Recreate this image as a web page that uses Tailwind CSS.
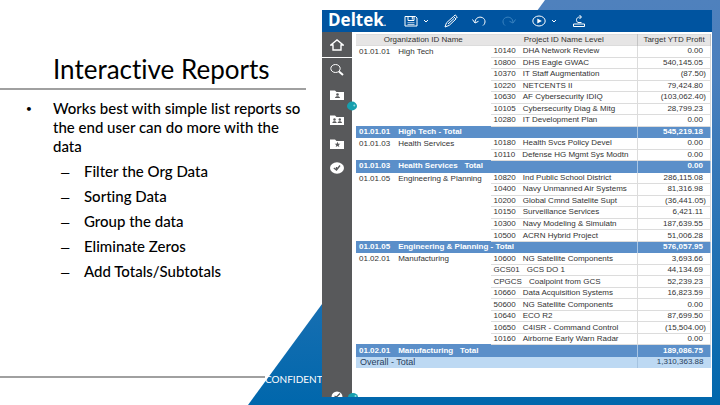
<!DOCTYPE html>
<html lang="en">
  <head>
    <meta charset="UTF-8" />
    <meta name="viewport" content="width=device-width, initial-scale=1.0" />
    <title>Interactive Reports</title>
    <script src="https://cdn.jsdelivr.net/npm/@tailwindcss/browser@4"></script>
  </head>
  <body class="bg-white text-black">
    <div class="relative isolate flex min-h-screen overflow-hidden">
      <!-- slide background -->
      <svg class="absolute inset-0 -z-10 h-full w-full" viewBox="0 0 720 405" preserveAspectRatio="none" aria-hidden="true">
        <defs>
          <linearGradient id="slope" x1="0" y1="0" x2="0" y2="1">
            <stop offset="0" stop-color="#4f81bd" />
            <stop offset="0.2" stop-color="#4a7fbd" />
            <stop offset="1" stop-color="#0067ac" />
          </linearGradient>
        </defs>
        <path d="M545 0H720V405H248Z" fill="url(#slope)" />
      </svg>

      <section class="flex w-[322px] shrink-0 flex-col font-[Lato,'Liberation_Sans',sans-serif] [font-variant-ligatures:none]">
        <h1 class="mr-4 border-b-2 border-[#a0a0a0] pt-[53px] pb-[3px] pl-[53px] text-[26px] leading-8">Interactive Reports</h1>
        <ul class="pt-[9px] text-[15px] leading-[19px] font-medium">
          <li class="flex">
            <span class="w-[53px] shrink-0 pl-[26px] text-[10px]">•</span>
            <span class="pr-4">Works best with simple list reports so the end user can do more with the data</span>
          </li>
          <li class="pt-1.5 pl-[61px]">
            <ul class="space-y-1.5">
              <li class="flex"><span class="w-[23px] font-['Liberation_Sans',sans-serif]">–</span>Filter the Org Data</li>
              <li class="flex"><span class="w-[23px] font-['Liberation_Sans',sans-serif]">–</span>Sorting Data</li>
              <li class="flex"><span class="w-[23px] font-['Liberation_Sans',sans-serif]">–</span>Group the data</li>
              <li class="flex"><span class="w-[23px] font-['Liberation_Sans',sans-serif]">–</span>Eliminate Zeros</li>
              <li class="flex"><span class="w-[23px] font-['Liberation_Sans',sans-serif]">–</span>Add Totals/Subtotals</li>
            </ul>
          </li>
        </ul>
        <footer class="mt-auto flex pb-[18px] text-[10px] leading-4 text-white">
          <span class="mt-[5px] h-0.5 w-[265px] shrink-0 bg-[#a0a0a0]"></span>CONFIDENT
        </footer>
      </section>

      <section class="mt-2.5 mr-2 mb-2 flex flex-1 flex-col bg-white font-['Liberation_Sans',Arial,sans-serif]">
        <header class="flex h-[22px] shrink-0 items-center bg-[#0054a0] pl-1.5 text-white">
          <span class="w-[76px] font-['Open_Sans',sans-serif] text-[17px] leading-5 font-bold">Deltek<span class="text-[8px]">.</span></span>
          <button aria-label="Save" class="w-3.5">
            <svg class="h-3.5 w-3.5" viewBox="0 0 14 14" fill="none" stroke="currentColor"><path d="M1 2.5H11.5L13 4V12H1Z" /><path d="M4 2.5V6.5H10V2.5M8.3 3V5.5" /><path d="M3.5 8.7H10.5M3.5 10.5H10.5" stroke-width=".7" /></svg>
          </button>
          <button aria-label="Save options" class="ml-1 w-2">
            <svg class="h-2 w-2" viewBox="0 0 8 8" fill="none" stroke="currentColor"><path d="M2 3L4 5L6 3" /></svg>
          </button>
          <button aria-label="Edit" class="ml-3.5 w-3.5">
            <svg class="h-3.5 w-3.5" viewBox="0 0 14 14" fill="none" stroke="currentColor"><path d="M1 13L2.5 8.8L9.5 2.5L12 5L5.2 11.4Z" /><path d="M9.8 2.2L11.2 1L13.3 3L12 4.5M4 10L10 4.5" /></svg>
          </button>
          <button aria-label="Undo" class="ml-3.5 w-3.5">
            <svg class="h-3.5 w-3.5" viewBox="0 0 14 14" fill="none" stroke="currentColor"><path d="M.5 5.5L3 9L6.5 7.3M3 8.5C3.2 4.5 6 2.8 9 3.2C13.5 4 14.3 9 11 11.5" /></svg>
          </button>
          <button aria-label="Redo" class="ml-4 w-3.5 text-[#3a83c0]">
            <svg class="h-3.5 w-3.5" viewBox="0 0 14 14" fill="none" stroke="currentColor"><path d="M13.5 5.5L11 9L7.5 7.3M11 8.5C10.8 4.5 8 2.8 5 3.2C.5 4-.3 9 3 11.5" /></svg>
          </button>
          <button aria-label="Run" class="ml-4 w-3.5">
            <svg class="h-3.5 w-3.5" viewBox="0 0 14 14" fill="none" stroke="currentColor"><ellipse cx="7" cy="7" rx="6.2" ry="5" /><path d="M5.3 4.5L9.8 7L5.3 9.5Z" fill="currentColor" stroke="none" /></svg>
          </button>
          <button aria-label="Run options" class="ml-1 w-2">
            <svg class="h-2 w-2" viewBox="0 0 8 8" fill="none" stroke="currentColor"><path d="M2 3L4 5L6 3" /></svg>
          </button>
          <button aria-label="Share" class="ml-3.5 w-3.5">
            <svg class="h-3.5 w-3.5" viewBox="0 0 14 14" fill="none" stroke="currentColor"><path d="M1.5 10H12.5V12.5H1.5Z" /><path d="M9.5 8.5H6C3.5 7.5 4 3.2 7.5 3H9M7.5 1L9.5 3L7.5 5" /></svg>
          </button>
        </header>

        <div class="flex flex-1">
          <nav class="relative w-[30px] shrink-0 bg-[#58595b] text-white">
            <div class="flex flex-col items-center">
              <a href="#" aria-label="Home" class="flex h-[26px] w-full items-center justify-center border-b border-white">
                <svg class="h-3.5 w-3.5" viewBox="0 0 14 14" fill="none" stroke="currentColor" stroke-width="1.4"><path d="M.8 7L7 2L13.2 7H11V12H3V7Z" /></svg>
              </a>
              <a href="#" aria-label="Search" class="flex h-6 items-center">
                <svg class="h-3.5 w-3.5" viewBox="0 0 14 14" fill="none" stroke="currentColor"><ellipse cx="5.5" cy="5.5" rx="4.7" ry="4" /><path d="M9 8.5L13 12" stroke-width="2" /></svg>
              </a>
              <a href="#" aria-label="My content" class="flex h-[25px] items-center">
                <svg class="h-3.5 w-3.5" viewBox="0 0 14 14" fill="currentColor"><path d="M0 2.5H5L6.5 4H14V12H0Z" /><g fill="#58595b"><circle cx="7.5" cy="6.5" r="1.3" /><path d="M5 10C5 7.8 10 7.8 10 10Z" /></g></svg>
              </a>
              <a href="#" aria-label="Team content" class="flex h-[25px] items-center">
                <svg class="h-3.5 w-3.5" viewBox="0 0 14 14" fill="currentColor"><path d="M0 2.5H5L6.5 4H14V12H0Z" /><g fill="#58595b"><circle cx="4.5" cy="6.5" r="1.2" /><path d="M2.3 10C2.3 7.8 6.7 7.8 6.7 10Z" /><circle cx="9.8" cy="6.5" r="1.2" /><path d="M7.6 10C7.6 7.8 12 7.8 12 10Z" /></g></svg>
              </a>
              <a href="#" aria-label="Favorites" class="flex h-6 items-center">
                <svg class="h-3.5 w-3.5" viewBox="0 0 14 14" fill="currentColor"><path d="M0 2.5H5L6.5 4H14V12H0Z" /><path d="M7.5 4.8L8.3 6.7H10.4L8.7 8L9.3 10L7.5 8.9L5.7 10L6.3 8L4.6 6.7H6.7Z" fill="#58595b" /></svg>
              </a>
              <a href="#" aria-label="Recent" class="flex h-6 items-center">
                <svg class="h-3.5 w-3.5" viewBox="0 0 14 14"><ellipse cx="7" cy="7" rx="7" ry="5.8" fill="currentColor" /><path d="M3.8 7L6.5 9L10 4.5M6.5 9V6" fill="none" stroke="#58595b" stroke-width="1.3" /></svg>
              </a>
            </div>
            <svg class="absolute top-[69px] left-[25px] h-2.5 w-2.5" viewBox="0 0 10 10" aria-hidden="true"><ellipse cx="5" cy="5" rx="5" ry="4.4" fill="#169fae" /><circle cx="7.3" cy="4.5" r="1" fill="#8fd9df" /></svg>
            <!-- next entries, cut off by the panel edge -->
            <svg class="absolute bottom-0 left-2 h-1.5 w-7" viewBox="0 0 28 6" aria-hidden="true"><ellipse cx="7" cy="6" rx="5.5" ry="5.5" fill="#fff" /><path d="M4.5 5L6.5 6L10 2.5" fill="none" stroke="#58595b" stroke-width="1.3" /><ellipse cx="23" cy="6" rx="5" ry="4" fill="#169fae" /><circle cx="25.5" cy="5" r="1" fill="#8fd9df" /></svg>
          </nav>

          <div class="flex-1 pt-0.5 pr-px pl-1">
            <table class="h-[334px] w-full table-fixed text-[8px] leading-[10px] whitespace-nowrap text-[#333]">
              <colgroup>
                <col />
                <col class="w-[147px]" />
                <col class="w-[73px]" />
              </colgroup>
              <thead class="bg-[#e6e5e5]">
                <tr class="border-y border-[#dcdcdc]">
                  <th class="font-normal">Organization ID Name</th>
                  <th class="font-normal">Project ID Name Level</th>
                  <th class="border-x border-[#c4c4c4] font-normal">Target YTD Profit</th>
                </tr>
              </thead>
              <tbody id="rows"></tbody>
              <tfoot class="bg-[#bdd9f3] text-[#28405c]">
                <tr class="border-b border-[#bdd9f3]">
                  <td colspan="2" class="pl-1 text-[9px]">Overall - Total</td>
                  <td class="border-l border-[#a5c3e0] pr-[7px] text-right">1,310,363.88</td>
                </tr>
              </tfoot>
            </table>
          </div>
        </div>
      </section>
    </div>

    <script>
      const groups = [
        { id: "01.01.01", name: "High Tech", dash: "-", total: "545,219.18", items: [
          ["10140", "DHA Network Review", "0.00"],
          ["10800", "DHS Eagle GWAC", "540,145.05"],
          ["10370", "IT Staff Augmentation", "(87.50)"],
          ["10220", "NETCENTS II", "79,424.80"],
          ["10630", "AF Cybersecurity IDIQ", "(103,062.40)"],
          ["10105", "Cybersecurity Diag & Mitg", "28,799.23"],
          ["10280", "IT Development Plan", "0.00"],
        ] },
        { id: "01.01.03", name: "Health Services", dash: " ", total: "0.00", items: [
          ["10180", "Health Svcs Policy Devel", "0.00"],
          ["10110", "Defense HG Mgmt Sys Modtn", "0.00"],
        ] },
        { id: "01.01.05", name: "Engineering & Planning", dash: "-", total: "576,057.95", items: [
          ["10820", "Ind Public School District", "286,115.08"],
          ["10400", "Navy Unmanned Air Systems", "81,316.98"],
          ["10200", "Global Cmnd Satelite Supt", "(36,441.05)"],
          ["10150", "Surveillance Services", "6,421.11"],
          ["10300", "Navy Modeling & Simulatn", "187,639.55"],
          ["10500", "ACRN Hybrid Project", "51,006.28"],
        ] },
        { id: "01.02.01", name: "Manufacturing", dash: " ", total: "189,086.75", items: [
          ["10600", "NG Satellite Components", "3,693.66"],
          ["GCS01", "GCS DO 1", "44,134.69"],
          ["CPGCS", "Coalpoint from GCS", "52,239.23"],
          ["10660", "Data Acquisition Systems", "16,823.59"],
          ["50600", "NG Satellite Components", "0.00"],
          ["10640", "ECO R2", "87,699.50"],
          ["10650", "C4ISR - Command Control", "(15,504.00)"],
          ["10160", "Airborne Early Warn Radar", "0.00"],
        ] },
      ];

      const esc = (s) => s.replace(/&/g, "&amp;");
      let html = "";
      groups.forEach((g) => {
        g.items.forEach(([id, name, amount], i) => {
          const pad = amount.startsWith("(") ? "pr-1" : "pr-[7px]";
          html += "<tr>";
          if (i === 0) {
            html += `<td rowspan="${g.items.length}" class="pt-px pl-[3px] align-top"><span class="mr-2">${g.id}</span>${esc(g.name)}</td>`;
          }
          html += `<td class="border-b border-[#dcdcdc] pl-[3px]"><span class="mr-[7px]">${id}</span>${esc(name)}</td>`;
          html += `<td class="border-x border-b border-[#dcdcdc] ${pad} text-right">${amount}</td></tr>`;
        });
        html += `<tr class="border-y border-[#5b8fc9] bg-[#5b8fc9] font-bold text-white">
          <td colspan="2" class="pl-[3px] whitespace-pre"><span class="mr-2">${g.id}</span>${esc(g.name)} ${g.dash} Total</td>
          <td class="border-x border-[#a9c6e4] pr-[7px] text-right">${g.total}</td></tr>`;
      });
      document.getElementById("rows").innerHTML = html;
    </script>
  </body>
</html>
